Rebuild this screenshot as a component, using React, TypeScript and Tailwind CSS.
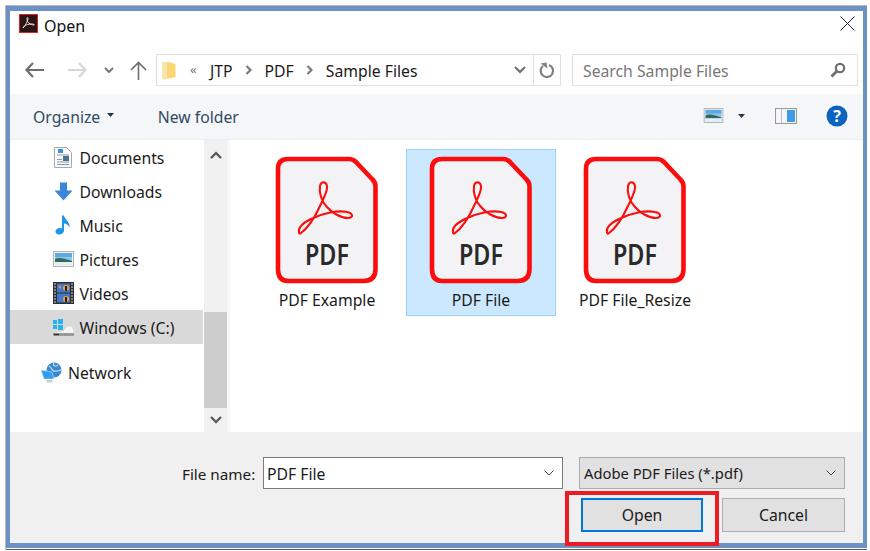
import React from "react";

const PdfIcon = () => (
  <svg width="104" height="128" viewBox="0 0 104 128" className="block">
    <path d="M13 3 H74 Q78 3 81 6 L97.5 23.5 Q100.5 26.5 100.5 30.5 V113 Q100.5 125 88.5 125 H13 Q3 125 3 113 V13 Q3 3 13 3 Z" fill="#f3f3f5" stroke="#fb0d0d" strokeWidth="4.6" />
    <path d="M26 77 C33 72 39 63 45 50 C49 42 53 34 52 30 C51 25 46 25 45 30 C44 36 46 45 52 51 C57 57 66 62 73 62 C79 62 78 57 72 56 C63 54 48 57 36 63 C28 67 23 72 24 76 C24 78 25 78 26 77 Z" fill="none" stroke="#f80f0f" strokeWidth="2.1" strokeLinejoin="round" />
    <text x="30" y="108.5" textLength="44" lengthAdjust="spacingAndGlyphs" fontFamily="'Noto Sans', sans-serif" fontWeight="600" fontSize="29" fill="#2a2a2a">PDF</text>
  </svg>
);

const FileItem = ({ name, selected }: { name: string; selected?: boolean }) => (
  <div className={`w-[150px] h-[167px] flex flex-col items-center pt-[6px] border ${selected ? "bg-[#cce8ff] border-[#99d1ff]" : "border-transparent"}`}>
    <PdfIcon />
    <div className="mt-[6px] text-[15.75px] leading-[20px] text-[#1a1a1a] whitespace-nowrap">{name}</div>
  </div>
);

const DocsIcon = () => (
  <svg width="18" height="21" viewBox="0 0 18 21">
    <path d="M.5.5 H12.5 L17.5 5.5 V20.5 H.5 Z" fill="#fafafa" stroke="#a9a9a9" />
    <path d="M3 8h12M3 15h12M3 17.5h12M3 12.5h5" stroke="#8a9aa8" strokeWidth="1" />
    <rect x="4" y="2" width="5" height="4" fill="#3d8fdc" />
    <rect x="9" y="9" width="6" height="5" fill="#50708e" />
  </svg>
);
const DownIcon = () => (
  <svg width="19" height="19" viewBox="0 0 19 19">
    <path d="M6 0.5 H13 V8.5 H18.5 L9.5 18.5 L.5 8.5 H6 Z" fill="#3b87dc" />
  </svg>
);
const MusicIcon = () => (
  <svg width="16" height="20" viewBox="0 0 16 20">
    <path d="M7 .5 H9 C9.5 5 15.5 6 14.5 13 C14 10 11 8.5 9 8.5 V15.5 C9 18 6.5 19.5 4 19.5 C1.5 19.5 .5 18 .5 16.5 C.5 14.5 3 13 5 13 C6 13 6.5 13.2 7 13.5 Z" fill="#1e96e6" />
  </svg>
);
const PictureIcon = ({ w = 21, h = 16 }: { w?: number; h?: number }) => (
  <svg width={w} height={h} viewBox="0 0 21 16">
    <rect x=".5" y=".5" width="20" height="15" fill="#f2f2f2" stroke="#b3b3b3" />
    <rect x="2" y="2" width="17" height="12" fill="#8ec6ee" />
    <path d="M2 2 H19 V6 H2 Z" fill="#5fa9e2" />
    <path d="M2 8 C6 6 10 7 19 10 V11 H2 Z" fill="#2f6b5c" />
    <path d="M2 11 H19 V14 H2 Z" fill="#e3eef5" />
  </svg>
);
const VideoIcon = () => (
  <svg width="21" height="22" viewBox="0 0 21 22">
    <rect width="21" height="22" fill="#2e2e2e" />
    <rect x="4" y="1.5" width="13" height="9" fill="#3f78c8" />
    <rect x="4" y="11.5" width="13" height="9" fill="#3f78c8" />
    <circle cx="13" cy="6" r="3" fill="#e8a23a" />
    <circle cx="13" cy="17" r="3" fill="#e8a23a" />
    <rect x="12" y="4" width="2" height="5" fill="#231f1f" />
    <rect x="12" y="15" width="2" height="5" fill="#231f1f" />
    <circle cx="7" cy="5" r="1.5" fill="#d98a6a" />
    <path d="M1 2h2M1 5h2M1 8h2M1 11h2M1 14h2M1 17h2M1 20h2M18 2h2M18 5h2M18 8h2M18 11h2M18 14h2M18 17h2M18 20h2" stroke="#d8d8d8" strokeWidth="1.2" />
  </svg>
);
const DriveIcon = () => (
  <svg width="21" height="19" viewBox="0 0 21 19">
    <rect x="0" y="2" width="4" height="4" fill="#25b4f0" />
    <rect x="5" y="1" width="5" height="5" fill="#25b4f0" />
    <rect x="0" y="7" width="4" height="4" fill="#25b4f0" />
    <rect x="5" y="7" width="5" height="5" fill="#25b4f0" />
    <path d="M14 8 H19 L21 13 V16 H1 V14 L10 13 Z" fill="#f4f4f4" stroke="#cfcfcf" strokeWidth=".6" />
    <path d="M0 15 H21 V17 Q21 18 20 18 H1 Q0 18 0 17 Z" fill="#9a9a9a" />
    <path d="M1 16.5 H6" stroke="#333" strokeWidth="1.4" />
  </svg>
);
const NetworkIcon = () => (
  <svg width="21" height="21" viewBox="0 0 21 21">
    <circle cx="13" cy="8" r="7.5" fill="#3a86cf" />
    <path d="M8 4 C11 6 10 8 13 9 C16 10 18 8 20 8 M13 1 C11 4 15 5 17 3" stroke="#a8d4f2" strokeWidth="1.4" fill="none" />
    <path d="M0 8 L11 10 L13 17 L3 17 Z" fill="#2f9df0" stroke="#cfe3f5" strokeWidth=".6" />
    <path d="M5 18 L11 18 L12 20.5 L6 20.5 Z" fill="#c9ced3" />
  </svg>
);

const Chev = ({ up, cls = "#555" }: { up?: boolean; cls?: string }) => (
  <svg width="12" height="8" viewBox="0 0 12 8">
    <path d={up ? "M1 7 L6 2 L11 7" : "M1 1 L6 6 L11 1"} fill="none" stroke={cls} strokeWidth="2.2" />
  </svg>
);
const Crumb = () => (
  <svg width="7" height="10" viewBox="0 0 7 10" className="mx-[12.5px]">
    <path d="M1.5 1 L5.5 5 L1.5 9" fill="none" stroke="#7a7a7a" strokeWidth="2.2" />
  </svg>
);
const Caret = ({ color = "#1f3550" }: { color?: string }) => (
  <svg width="7" height="4" viewBox="0 0 7 4">
    <path d="M0 0 H7 L3.5 4 Z" fill={color} />
  </svg>
);
const ThinChev = () => (
  <svg width="10" height="6" viewBox="0 0 10 6">
    <path d="M.5 .5 L5 5 L9.5 .5" fill="none" stroke="#4a4a4a" strokeWidth="1" />
  </svg>
);

const NavRow = ({ icon, label, active }: { icon: React.ReactNode; label: string; active?: boolean }) => (
  <div className={`h-[34px] mr-[1px] flex items-center pl-[42px] ${active ? "bg-[#d9d9d9]" : ""}`}>
    <div className="w-[22px] flex justify-center">{icon}</div>
    <span className="ml-[5.5px] pt-[4px] text-[15.75px] text-[#1a1a1a] whitespace-nowrap">{label}</span>
  </div>
);

export default function App() {
  return (
    <div className="w-[870px] h-[551px] bg-white overflow-hidden pt-[5px] pl-[5px] font-['Noto_Sans',sans-serif]">
      <div className="w-[862px] h-[545px] border-t border-l border-[#b8b8b8]">
        <div className="w-[861px] h-[542px] bg-white border-t-[5px] border-x-[4px] border-b-[5px] border-[#6c91c2] flex flex-col">
          {/* title */}
          <div className="h-[37px] shrink-0 flex items-start pl-[9px] pr-[6px] pt-[3px]">
            <svg width="19" height="19" viewBox="0 0 19 19" className="shrink-0">
              <rect x=".5" y=".5" width="18" height="18" fill="#2d1414" stroke="#e8201f" />
              <path d="M4 14 C7 11 8 8 9 5 C9 3 8 3 8 5 C8 8 11 11 15 11 C16 11 15 10 13 10 C9 10 5 11 4 14 Z" fill="none" stroke="#e6dcdc" strokeWidth="1" />
            </svg>
            <span className="ml-[6px] mt-[2px] text-[16px] leading-[20px] text-[#111]">Open</span>
            <svg width="15" height="15" viewBox="0 0 15 15" className="ml-auto mt-[2px] mr-[2px]">
              <path d="M.5 .5 L14.5 14.5 M14.5 .5 L.5 14.5" stroke="#222" strokeWidth="1" />
            </svg>
          </div>
          {/* nav row */}
          <div className="h-[46px] shrink-0 flex items-start pt-[6px]">
            <div className="w-[146px] h-[32px] flex items-center pl-[15px]">
              <svg width="19" height="16" viewBox="0 0 19 16">
                <path d="M8 1 L1.5 8 L8 15 M2 8 H19" fill="none" stroke="#6e6e6e" strokeWidth="2.2" />
              </svg>
              <svg width="19" height="16" viewBox="0 0 19 16" className="ml-[24px]">
                <path d="M11 1 L17.5 8 L11 15 M0 8 H17" fill="none" stroke="#d6d6d6" strokeWidth="2.2" />
              </svg>
              <svg width="10" height="6" viewBox="0 0 10 6" className="ml-[17px]">
                <path d="M1 1 L5 5 L9 1" fill="none" stroke="#777" strokeWidth="2" />
              </svg>
              <svg width="17" height="19" viewBox="0 0 17 19" className="ml-[16px]">
                <path d="M1 9 L8.5 1.5 L16 9 M8.5 2 V19" fill="none" stroke="#6e6e6e" strokeWidth="1.6" />
              </svg>
            </div>
            <div className="w-[405px] h-[32px] border border-[#e0e0e0] flex items-center">
              <svg width="14" height="19" viewBox="0 0 14 19" className="ml-[5px] shrink-0">
                <path d="M0 1 H7 L13.5 3 V16 L1.5 18.5 L0 17 Z" fill="#fbd774" />
                <path d="M0 1 H5 V17 L1.5 18.5 L0 17 Z" fill="#f5e6b0" />
              </svg>
              <span className="ml-[14px] text-[13px] text-[#777] w-[12px]">«</span>
              <span className="ml-[8px] pt-[3px] text-[15.75px] text-[#1a1a1a]">JTP</span>
              <Crumb />
              <span className="pt-[3px] text-[15.75px] text-[#1a1a1a]">PDF</span>
              <Crumb />
              <span className="pt-[3px] text-[15.75px] text-[#1a1a1a]">Sample Files</span>
              <svg width="12" height="8" viewBox="0 0 12 8" className="ml-auto mr-[7px]">
                <path d="M1 1 L6 6 L11 1" fill="none" stroke="#6e6e6e" strokeWidth="2" />
              </svg>
              <div className="w-[27px] h-full border-l border-[#e0e0e0] flex items-center justify-center">
                <svg width="16" height="17" viewBox="0 0 16 17">
                  <path d="M10 3 A6.2 6.2 0 1 1 4 4" fill="none" stroke="#808080" strokeWidth="2.2" />
                  <path d="M2 1 H8 V7 Z" fill="#808080" transform="rotate(-8 5 4)" />
                </svg>
              </div>
            </div>
            <div className="ml-[11px] w-[286px] h-[32px] border border-[#e0e0e0] flex items-center pl-[10px] pr-[11px]">
              <span className="pt-[3px] text-[15.75px] text-[#777]">Search Sample Files</span>
              <svg width="16" height="16" viewBox="0 0 16 16" className="ml-auto">
                <circle cx="10" cy="6" r="4.2" fill="none" stroke="#6e6e6e" strokeWidth="2.2" />
                <path d="M7 9 L1.5 14.5" stroke="#6e6e6e" strokeWidth="2.8" />
              </svg>
            </div>
          </div>
          {/* toolbar */}
          <div className="h-[46px] shrink-0 bg-[#f5f6f7] flex items-center pl-[23px] pb-[2px] border-b border-[#eeeeee]">
            <span className="pt-[5px] text-[15.75px] text-[#2f4a66]">Organize</span>
            <span className="ml-[7px] mb-[1px] flex"><Caret /></span>
            <span className="ml-[43.5px] pt-[5px] text-[15.75px] text-[#2f4a66]">New folder</span>
            <span className="ml-auto flex"><PictureIcon w={21} h={15} /></span>
            <span className="ml-[14px] flex"><Caret /></span>
            <svg width="22" height="16" viewBox="0 0 22 16" className="ml-[30px]">
              <rect x=".5" y=".5" width="21" height="15" fill="#f6f6f6" stroke="#9a9a9a" />
              <rect x="6" y="1" width="1" height="14" fill="#bdbdbd" />
              <rect x="12" y="2" width="8" height="12" fill="#3f9ae8" />
            </svg>
            <svg width="22" height="22" viewBox="0 0 22 22" className="ml-[29px] mr-[15px]">
              <circle cx="11" cy="11" r="10.5" fill="#0b63bd" />
              <text x="11" y="17" textAnchor="middle" fontFamily="'Noto Sans', sans-serif" fontWeight="700" fontSize="16" fill="#fff">?</text>
            </svg>
          </div>
          {/* main */}
          <div className="h-[292px] shrink-0 flex">
            <div className="w-[194px] shrink-0">
              <NavRow icon={<DocsIcon />} label="Documents" />
              <NavRow icon={<DownIcon />} label="Downloads" />
              <NavRow icon={<MusicIcon />} label="Music" />
              <NavRow icon={<PictureIcon />} label="Pictures" />
              <NavRow icon={<VideoIcon />} label="Videos" />
              <NavRow icon={<DriveIcon />} label="Windows (C:)" active />
              <div className="h-[34px] mt-[11px] flex items-center pl-[31px]">
                <NetworkIcon />
                <span className="ml-[6px] pt-[4px] text-[15.75px] text-[#1a1a1a]">Network</span>
              </div>
            </div>
            <div className="w-[23px] shrink-0 bg-[#f0f0f0] flex flex-col items-center">
              <div className="h-[28px] flex items-center pt-[1px]"><Chev up /></div>
              <div className="h-[144px]" />
              <div className="w-full h-[96px] bg-[#cdcdcd]" />
              <div className="flex-1 flex items-center"><Chev /></div>
            </div>
            <div className="w-[3px] shrink-0 bg-[#f7f7f7]" />
            <div className="flex-1 flex gap-[4px] pt-[9px] pl-[22px]">
              <FileItem name="PDF Example" />
              <FileItem name="PDF File" selected />
              <FileItem name="PDF File_Resize" />
            </div>
          </div>
          {/* footer */}
          <div className="flex-1 bg-[#f0f0f0] flex flex-col pt-[25px] pr-[18px]">
            <div className="flex items-center h-[32px]">
              <span className="ml-[172px] w-[81px] pt-[3px] text-[15.25px] text-[#1a1a1a] whitespace-nowrap">File name:</span>
              <div className="w-[300px] h-[32px] bg-white border border-[#7a7a7a] flex items-center pl-[3px] pr-[8px]">
                <span className="pt-[3px] text-[15.75px] text-[#1a1a1a]">PDF File</span>
                <span className="ml-auto flex"><ThinChev /></span>
              </div>
              <div className="ml-[16px] w-[266px] h-[32px] bg-[#e1e1e1] border border-[#adadad] flex items-center pl-[4px] pr-[8px]">
                <span className="pt-[1px] text-[14.75px] text-[#1a1a1a] whitespace-nowrap">Adobe PDF Files (*.pdf)</span>
                <span className="ml-auto flex"><ThinChev /></span>
              </div>
            </div>
            <div className="flex justify-end mt-[9px] gap-[19px]">
              <div className="relative w-[122px] h-[34px] bg-[#e1e1e1] border-2 border-[#0078d7] flex items-center justify-center pt-[2px] text-[15.75px] text-[#1a1a1a]">
                Open
                <div className="absolute -left-[18px] -right-[18px] -top-[9px] -bottom-[16px] border-[4px] border-[#ed1c24]" />
              </div>
              <div className="w-[123px] h-[34px] bg-[#e1e1e1] border border-[#adadad] flex items-center justify-center pt-[2px] text-[15.75px] text-[#1a1a1a]">
                Cancel
              </div>
            </div>
          </div>
        </div>
        <div className="h-[1px]" />
        <div className="h-[1px] bg-[#5a5a5a]" />
      </div>
    </div>
  );
}
